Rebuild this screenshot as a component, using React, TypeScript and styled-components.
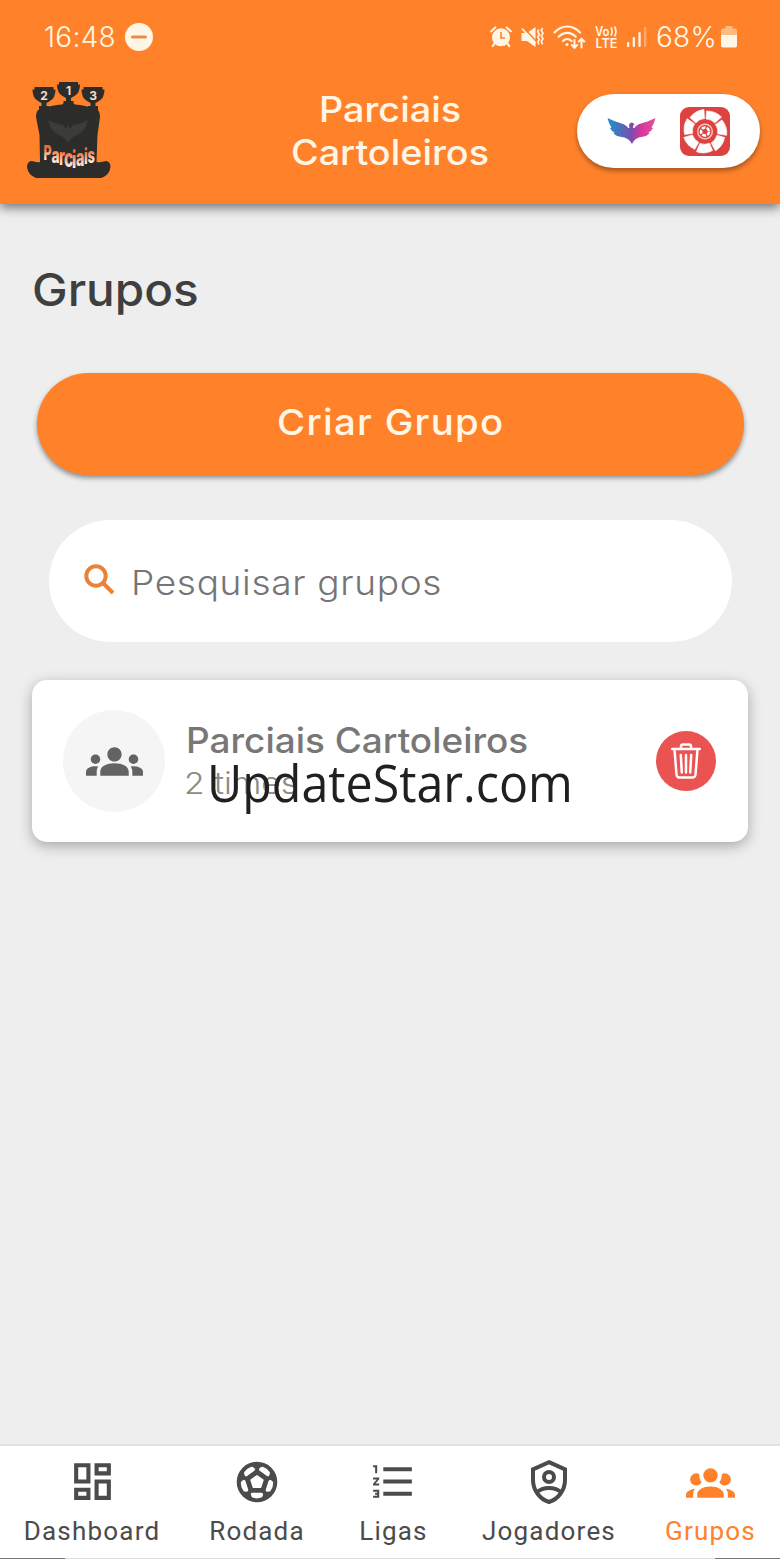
import { FC, ReactNode } from "react";
import styled, { createGlobalStyle, css } from "styled-components";
import { MdFormatListNumbered, MdGroups, MdOutlineDashboard } from "react-icons/md";

const ORANGE = "#ff822b";
const GREY = "#4b4b4b";
const CREAM = "#fff6e6";
const HAT = "#2c2d2a";

const GlobalStyle = createGlobalStyle`
  * {
    box-sizing: border-box;
  }

  body {
    margin: 0;
    background-color: #eeeeee;
    font-family: Inter, "Open Sans", sans-serif;
  }

  svg {
    display: block;
    flex-shrink: 0;
  }
`;

const Screen = styled.div`
  display: flex;
  flex-direction: column;
  width: 780px;
  height: 1559px;
  overflow: hidden;
  background-color: #eeeeee;
`;

const Header = styled.header`
  height: 204px;
  flex-shrink: 0;
  background-color: ${ORANGE};
  box-shadow: 0 4px 10px rgba(0, 0, 0, 0.5);
`;

const StatusBar = styled.div`
  display: flex;
  align-items: center;
  justify-content: space-between;
  height: 74px;
  padding: 0 43px 0 44px;
  color: ${CREAM};
`;

const StatusGroup = styled.div`
  display: flex;
  align-items: center;
  gap: 9px;
`;

const StatusText = styled.span<{ $gapRight?: number }>`
  margin-right: ${({ $gapRight = 0 }) => $gapRight}px;
  font-size: 28px;
  line-height: 32px;
  font-weight: 350;
  letter-spacing: 0.3px;
`;

const AppBar = styled.div`
  display: grid;
  grid-template-columns: 183px 1fr 183px;
  align-items: center;
  height: 114px;
  padding: 0 20px;
`;

const LogoSlot = styled.div`
  padding: 0 0 3px 7px;
`;

const Title = styled.h1`
  margin: 0;
  color: ${CREAM};
  font-size: 35px;
  line-height: 43px;
  font-weight: 500;
  text-align: center;
  transform: scaleX(1.08);
`;

const Switcher = styled.div`
  display: flex;
  align-items: center;
  gap: 24px;
  height: 74px;
  padding: 0 30px;
  border-radius: 37px;
  background-color: #ffffff;
  box-shadow: 0 3px 5px rgba(0, 0, 0, 0.35);
`;

const Main = styled.main`
  display: flex;
  flex-direction: column;
  flex: 1;
  padding: 56px 32px 0;
`;

const Wide = styled.span<{ $by: number; $origin?: string }>`
  display: inline-block;
  transform: scaleX(${({ $by }) => $by});
  transform-origin: ${({ $origin = "left" }) => $origin} center;
`;

const PageTitle = styled.h2`
  margin: 0 0 54px 0;
  color: #3f3f3f;
  font-size: 45px;
  line-height: 59px;
  font-weight: 460;
`;

const CreateButton = styled.button`
  height: 102px;
  margin: 0 4px 45px 5px;
  padding: 0 0 4px;
  border: 0;
  border-radius: 51px;
  background-color: ${ORANGE};
  box-shadow: 0 3px 5px rgba(0, 0, 0, 0.4);
  color: ${CREAM};
  font-family: inherit;
  font-size: 36px;
  font-weight: 500;
  letter-spacing: 1.2px;
`;

const SearchBox = styled.div`
  display: flex;
  align-items: center;
  gap: 16px;
  height: 122px;
  margin: 0 16px 38px 17px;
  padding: 0 30px 0 35px;
  border-radius: 61px;
  background-color: #ffffff;
`;

const Placeholder = styled.span`
  color: #757575;
  font-size: 34px;
  font-weight: 300;
  letter-spacing: 0.6px;
  margin-top: 2px;
`;

const GroupCard = styled.article`
  position: relative;
  display: flex;
  align-items: center;
  height: 162px;
  padding: 0 32px 0 31px;
  border-radius: 15px;
  background-color: #ffffff;
  box-shadow: 0 4px 14px rgba(0, 0, 0, 0.3);
`;

const Avatar = styled.div`
  display: flex;
  align-items: center;
  justify-content: center;
  width: 102px;
  height: 102px;
  border-radius: 50%;
  background-color: #f5f5f5;
  color: #636363;
`;

const GroupInfo = styled.div`
  flex: 1;
  padding: 1px 0 0 21px;
`;

const GroupName = styled.div`
  color: #777777;
  font-size: 35px;
  line-height: 43px;
  font-weight: 460;
`;

const GroupCount = styled.div`
  margin-left: -2px;
  color: #8a8a8a;
  font-size: 30px;
  line-height: 42px;
  font-weight: 300;
`;

const DeleteButton = styled.button`
  display: flex;
  align-items: center;
  justify-content: center;
  width: 60px;
  height: 60px;
  padding: 0;
  border: 0;
  border-radius: 50%;
  background-color: #eb5353;
`;

const Watermark = styled.span`
  position: absolute;
  top: 67px;
  left: 175px;
  color: #202020;
  font-family: "Open Sans", sans-serif;
  font-size: 51px;
  line-height: 70px;
  white-space: nowrap;
  transform: scaleX(0.948);
  transform-origin: left center;
`;

const NavBar = styled.nav`
  display: flex;
  height: 115px;
  flex-shrink: 0;
  border-top: 2px solid #e2e2e2;
  background: linear-gradient(to right, #777777 65px, #dddddd 65px, #dddddd 715px, #777777 715px) bottom / 100% 1px
    no-repeat #ffffff;
`;

const NavItem = styled.a<{ $width: number; $active?: boolean }>`
  display: flex;
  flex-direction: column;
  align-items: center;
  width: ${({ $width }) => $width}px;
  color: ${GREY};
  ${({ $active }) =>
    $active &&
    css`
      color: ${ORANGE};
    `}
`;

const NavIcon = styled.div`
  display: flex;
  align-items: center;
  justify-content: center;
  height: 71px;
`;

const NavLabel = styled.span`
  font-family: Roboto, sans-serif;
  font-size: 26px;
  line-height: 28px;
  letter-spacing: 1.2px;
  white-space: nowrap;
`;

const DoNotDisturb: FC = () => (
  <svg width="28" height="28" viewBox="0 0 28 28">
    <circle cx="14" cy="14" r="14" fill={CREAM} />
    <path d="M7.5 14h13" stroke="#e98c4b" strokeWidth="3" strokeLinecap="round" />
  </svg>
);

const Alarm: FC = () => (
  <svg width="22" height="22" viewBox="0 0 22 22" fill="none" stroke={CREAM}>
    <circle cx="11" cy="11.3" r="9" fill={CREAM} stroke="none" />
    <path
      d="M1.2 5.2 5.3 1.5M20.8 5.2 16.7 1.5M4.5 17.500 2.8 20M17.5 17.500l1.7 2.500"
      strokeWidth="2.2"
      strokeLinecap="round"
    />
    <path d="M11 6v6h4" stroke={ORANGE} strokeWidth="1.6" />
  </svg>
);

const Muted: FC = () => (
  <svg width="23" height="22" viewBox="0 0 23 22" fill="none" stroke={CREAM}>
    <path d="M.5 7h5.5L14.500 1v20l-8.500-6H.5z" fill={CREAM} stroke="none" />
    <path d="M2 1 15 15" stroke={ORANGE} strokeWidth="1.6" />
    <path d="M1 2.500 14 17" strokeWidth="1.800" />
    <path
      d="M17.800 3.500l-1 2.300 1.500 2.700-1.500 2.500 1.500 2.500-1.500 2.500 1 2.500M21.500 2l-1.200 2.500 1.700 2.800-1.700 2.700 1.700 2.700-1.700 2.700 1.200 3"
      strokeWidth="1.700"
    />
  </svg>
);

const Wifi: FC = () => (
  <svg width="33" height="24" viewBox="0 0 33 24" fill="none" stroke={CREAM} strokeWidth="2.2" strokeLinecap="round">
    <path d="M1.500 7.500C9-.5 19.500-.5 27 7.500M5.700 11.800c5-5.300 12-5.300 17 0M10 16c2.700-2.700 5.800-2.700 8.500 0" />
    <circle cx="14" cy="19.500" r="1.500" fill={CREAM} stroke="none" />
    <path d="M21.500 15v7.500M18.800 20l2.700 2.800 2.700-2.800M28.500 22.500V14M25.800 16.500l2.700-2.800 2.700 2.800" strokeWidth="2" />
  </svg>
);

const VoLte: FC = () => (
  <svg width="23" height="24" viewBox="0 0 23 24" fill={CREAM} fontFamily="Inter, sans-serif" fontWeight="600">
    <text x="0" y="10.500" fontSize="12.500" textLength="14.500" lengthAdjust="spacingAndGlyphs">
      Vo
    </text>
    <path d="M16 2.500q2.300 4 0 8M19.500 1.500q3 5 0 10" fill="none" stroke={CREAM} strokeWidth="1.600" />
    <text x="0.500" y="22.500" fontSize="12.500" textLength="22" lengthAdjust="spacingAndGlyphs">
      LTE
    </text>
  </svg>
);

const Signal: FC = () => (
  <svg width="20" height="20" viewBox="0 0 20 20" fill={CREAM}>
    <rect x="0" y="15" width="2.300" height="5" rx="1" />
    <rect x="5.700" y="10" width="2.300" height="10" rx="1" />
    <rect x="11.400" y="5" width="2.300" height="15" rx="1" />
    <rect x="17" y="0" width="2.300" height="20" rx="1" opacity="0.350" />
  </svg>
);

const Battery: FC = () => (
  <svg width="16" height="22" viewBox="0 0 16 22">
    <path d="M4.500 0h7v2.500H14a2 2 0 0 1 2 2V9H0V4.500a2 2 0 0 1 2-2h2.500z" fill="#ffba80" />
    <path d="M0 9h16v10.500a2 2 0 0 1-2 2H2a2 2 0 0 1-2-2z" fill={CREAM} />
  </svg>
);

const SearchGlyph: FC = () => (
  <svg width="31" height="35" viewBox="0 0 31 35" fill="none" stroke="#e8833a" strokeWidth="4">
    <circle cx="12" cy="12" r="9.700" />
    <path d="M18.500 18.500 29 29" />
  </svg>
);

// letter, x, baseline and font size along the hat's curved lettering
const HAT_LETTERS: [string, number, number, number][] = [
  ["P", 16.5, 79, 20],
  ["a", 24.5, 81.5, 22],
  ["r", 32, 84, 23],
  ["c", 37, 86, 25],
  ["i", 45, 86.5, 24],
  ["a", 49, 85, 23],
  ["i", 57, 83, 21],
  ["s", 60.5, 81.5, 21],
];

const Trophy: FC<{ x: number; y: number; label: string }> = ({ x, y, label }) => (
  <g transform={`translate(${x} ${y})`}>
    <path
      d="M-9.500-8H9.500v2.500h2Q11.500 3 6 6L2.500 8v3H5v4H-5v-4h2.500V8L-6 6Q-11.500 3-11.500-5.500h2z"
      fill={HAT}
    />
    <text y="5" textAnchor="middle" fontSize="12" fontWeight="700" fill="#f7ddcf">
      {label}
    </text>
  </g>
);

const HatLogo: FC = () => (
  <svg width="84" height="98" viewBox="0 0 84 98" fontFamily="Inter, sans-serif">
    <defs>
      <linearGradient id="hatText" x1="0" y1="0" x2="0" y2="1">
        <stop offset="0.300" stopColor="#f26a35" />
        <stop offset="0.800" stopColor="#fff1e8" />
      </linearGradient>
    </defs>
    <path
      d="M9 36q0-7 4-8 12-4 22-4.500l2-1.500h9l2 1.500q10 .5 21 4.500 4 1 4 8l-2.500 18-1 27c5 1 6-1 10-1q4 1 4 6-1 8-9 11H9q-8-3-9-11 0-5 4-6c4 0 5 2 9 1L12.500 54z"
      fill={HAT}
    />
    <Trophy x={17} y={14} label="2" />
    <Trophy x={41.5} y={9} label="1" />
    <Trophy x={66} y={14} label="3" />
    <path d="M21 39q8 4 15 5l3 4 2-5 2 5 3-4q8-1 15-5-2 11-11 15-6 2-9 8-3-6-9-8-9-4-11-15z" fill="#3c3d3b" />
    {HAT_LETTERS.map(([char, x, y, size], i) => (
      <text
        key={i}
        transform={`translate(${x} ${y}) scale(.62 1)`}
        fontSize={size}
        fontWeight="800"
        fill="url(#hatText)"
      >
        {char}
      </text>
    ))}
  </svg>
);

const Eagle: FC = () => (
  <svg width="49" height="26" viewBox="0 0 49 26">
    <defs>
      <linearGradient id="eagle" x1="0" x2="1">
        <stop offset="0.100" stopColor="#2f86c5" />
        <stop offset="0.500" stopColor="#7a4db0" />
        <stop offset="0.700" stopColor="#d8359c" />
        <stop offset="1" stopColor="#e0559c" />
      </linearGradient>
    </defs>
    <path
      d="M.5 0q8 4 14 5.500 5 1.500 6.500 4.500l1.500 0-.5-2.500q.5-3 3-3l2.500 1.500-1 1-.5 3 1.500 0q1.500-3 6.500-4.500 6-1.500 14.500-5.500-1 5-4 9.500l1.500.5q-1.500 3-4.500 4.500l1 1q-3 3-7 3.300-8 1-10.500 7.200-3-6.200-11.500-7.200-4-.3-7-3.300l1-1q-3-1.500-4.500-4.500l1.500-.5Q1.500 5 .5 0z"
      fill="url(#eagle)"
    />
  </svg>
);

const BallBadge: FC = () => (
  <svg width="50" height="49" viewBox="-25 -24.500 50 49">
    <rect x="-25" y="-24.500" width="50" height="49" rx="9" fill="#dd4240" />
    {[0, 1, 2, 3, 4, 5, 6].map((i) => (
      <path
        key={i}
        d="M1.500-20.500A20.500 20.500 0 0 1 16.500-14.500L9.800-8.500A13 13 0 0 0 1-12.500z"
        transform={`rotate(${i * 51.43})`}
        fill="#ffffff"
        stroke="#ffffff"
        strokeWidth="0.6"
      />
    ))}
    <circle r="7.300" fill="none" stroke="#f3c4c2" strokeWidth="1.500" />
    <circle r="4" fill="none" stroke="#ffffff" strokeWidth="2.600" strokeDasharray="3.800 1.226" />
  </svg>
);

const Trash: FC = () => (
  <svg
    width="30"
    height="36"
    viewBox="0 0 30 36"
    fill="none"
    stroke="#ffffff"
    strokeWidth="2.500"
    strokeLinecap="round"
    strokeLinejoin="round"
  >
    <path d="M1.200 6h27.600M3.500 6.500 5.500 31.500q.3 3 2.800 3h13.400q2.500 0 2.800-3l2-25M10 5.500V3.500q0-2 2-2h6q2 0 2 2v2" />
    <path d="M9.800 12l1 17.500M15 12v17.500M20.200 12l-1 17.500" />
  </svg>
);

const SoccerBall: FC = () => (
  <svg width="42" height="42" viewBox="-21 -21 42 42">
    <circle r="20.300" fill={GREY} />
    <g fill="#ffffff" stroke="#ffffff" strokeLinejoin="round">
      <path d="M0-6.300 6-1.900 3.700 5.200H-3.700L-6-1.900z" strokeWidth="1.400" />
      {[0, 1, 2, 3, 4].map((i) => (
        <path key={i} d="M-4.500 12.300h9l-.7 1.800q-3.800 1.400-7.600 0z" strokeWidth="3.200" transform={`rotate(${i * 72})`} />
      ))}
    </g>
  </svg>
);

const Shield: FC = () => (
  <svg width="48" height="48" viewBox="0 0 24 24" fill="none" stroke={GREY} strokeWidth="2">
    <path d="M12 2.100 20 5.650V11c0 5-3.400 9.700-8 11-4.600-1.300-8-6-8-11V5.650z" />
    <circle cx="12" cy="9.500" r="2.500" />
    <path d="M5.700 17.300c3.400-3.100 9.200-3.100 12.600 0" />
  </svg>
);

const AccountGroup: FC = () => (
  <svg width="49" height="49" viewBox="0 0 24 24" fill="currentColor">
    <path d="M12 5.500A3.500 3.500 0 0 1 15.500 9 3.500 3.500 0 0 1 12 12.500 3.500 3.500 0 0 1 8.500 9 3.500 3.500 0 0 1 12 5.500M5 8c.56 0 1.080.15 1.530.42-.15 1.430.27 2.850 1.130 3.960C7.160 13.340 6.160 14 5 14a3 3 0 0 1-3-3 3 3 0 0 1 3-3m14 0a3 3 0 0 1 3 3 3 3 0 0 1-3 3c-1.160 0-2.160-.66-2.660-1.620.86-1.110 1.280-2.530 1.130-3.960C17.920 8.150 18.440 8 19 8M5.500 18.250c0-2.070 2.910-3.750 6.500-3.750s6.500 1.680 6.500 3.750V20h-13zM0 20v-1.500c0-1.390 1.890-2.560 4.450-2.900-.59.68-.95 1.620-.95 2.650V20zm24 0h-3.500v-1.750c0-1.030-.36-1.970-.95-2.650 2.560.34 4.450 1.510 4.450 2.900z" />
  </svg>
);

interface Tab {
  label: string;
  icon: ReactNode;
  width: number;
  active?: boolean;
}

const TABS: Tab[] = [
  { label: "Dashboard", icon: <MdOutlineDashboard size={49} />, width: 184 },
  { label: "Rodada", icon: <SoccerBall />, width: 146 },
  { label: "Ligas", icon: <MdFormatListNumbered size={49} />, width: 127 },
  { label: "Jogadores", icon: <Shield />, width: 184 },
  { label: "Grupos", icon: <AccountGroup />, width: 139, active: true },
];

const App: FC = () => {
  return (
    <Screen>
      <GlobalStyle />
      <Header>
        <StatusBar>
          <StatusGroup>
            <StatusText>16:48</StatusText>
            <DoNotDisturb />
          </StatusGroup>
          <StatusGroup>
            <Alarm />
            <Muted />
            <Wifi />
            <VoLte />
            <Signal />
            <StatusText $gapRight={-5}>68%</StatusText>
            <Battery />
          </StatusGroup>
        </StatusBar>
        <AppBar>
          <LogoSlot>
            <HatLogo />
          </LogoSlot>
          <Title>
            Parciais
            <br />
            Cartoleiros
          </Title>
          <Switcher>
            <Eagle />
            <BallBadge />
          </Switcher>
        </AppBar>
      </Header>
      <Main>
        <PageTitle>
          <Wide $by={1.06}>Grupos</Wide>
        </PageTitle>
        <CreateButton>
          <Wide $by={1.065} $origin="center">
            Criar Grupo
          </Wide>
        </CreateButton>
        <SearchBox>
          <SearchGlyph />
          <Placeholder>
            <Wide $by={1.09}>Pesquisar grupos</Wide>
          </Placeholder>
        </SearchBox>
        <GroupCard>
          <Avatar>
            <MdGroups size={57} />
          </Avatar>
          <GroupInfo>
            <GroupName>
              <Wide $by={1.055}>Parciais Cartoleiros</Wide>
            </GroupName>
            <GroupCount>
              <Wide $by={1.12}>2 times</Wide>
            </GroupCount>
          </GroupInfo>
          <DeleteButton aria-label="Excluir">
            <Trash />
          </DeleteButton>
          <Watermark>UpdateStar.com</Watermark>
        </GroupCard>
      </Main>
      <NavBar>
        {TABS.map(({ label, icon, width, active }) => (
          <NavItem key={label} $width={width} $active={active}>
            <NavIcon>{icon}</NavIcon>
            <NavLabel>{label}</NavLabel>
          </NavItem>
        ))}
      </NavBar>
    </Screen>
  );
};

export default App;
